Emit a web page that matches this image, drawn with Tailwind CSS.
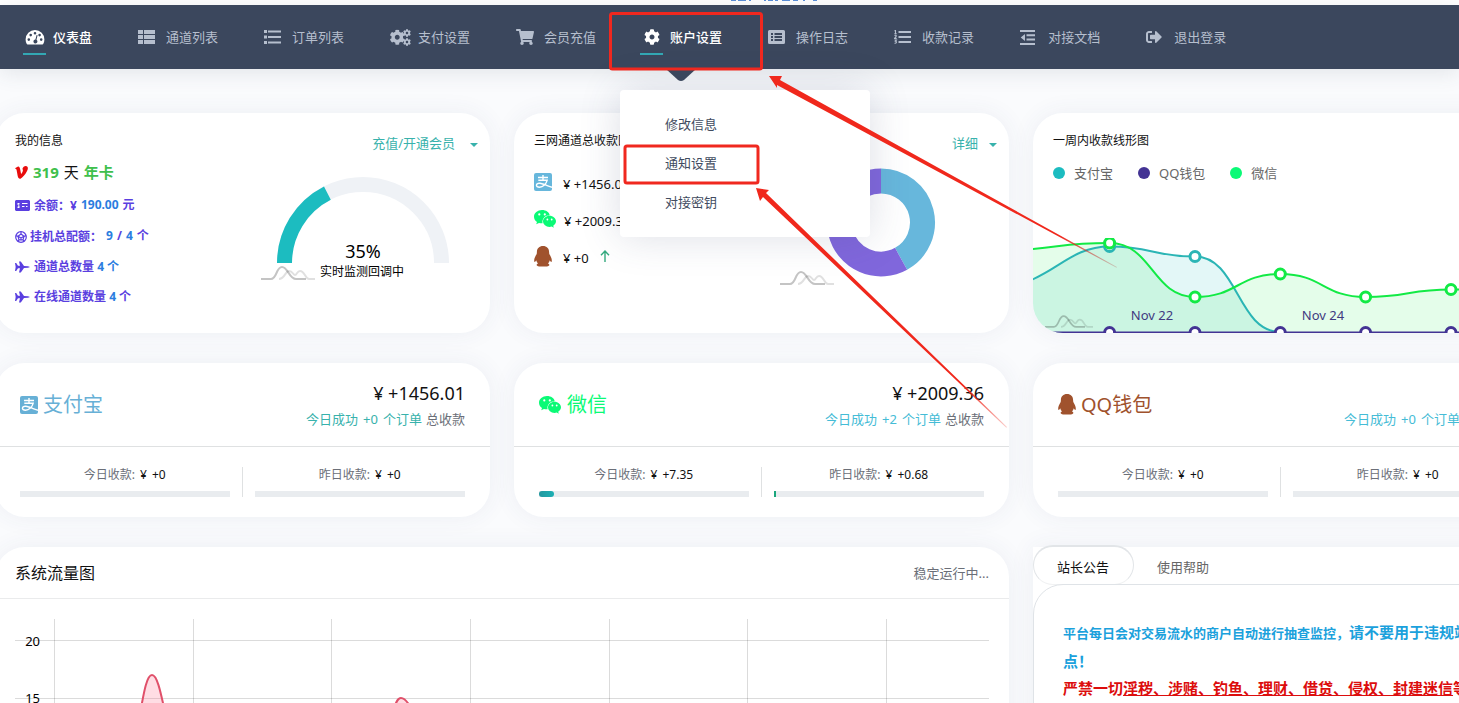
<!DOCTYPE html>
<html lang="zh-CN">
<head>
<meta charset="utf-8">
<meta name="viewport" content="width=device-width, initial-scale=1">
<title>仪表盘</title>
<script src="https://cdn.jsdelivr.net/npm/@tailwindcss/browser@4"></script>
</head>
<body class="relative h-screen overflow-hidden bg-[#fafbfd] font-['Noto_Sans','Noto_Sans_CJK_SC',sans-serif] text-[13px] leading-5 text-[#111]">

<!-- Icon sprite -->
<svg class="hidden" aria-hidden="true">
  <symbol id="i-dash" viewBox="0 0 20 16"><path fill-rule="evenodd" d="M10 1a9.4 9.4 0 0 0-9.4 9.4c0 1.700.4 3.300 1.200 4.700.2.300.4.400.700.400h15c.3 0 .5-.1.700-.4.8-1.400 1.200-3 1.200-4.700A9.400 9.400 0 0 0 10 1zM3.800 9.300a1.300 1.300 0 1 1 0 2.600 1.300 1.300 0 0 1 0-2.600zM5.700 4.800a1.300 1.300 0 1 1 0 2.600 1.300 1.300 0 0 1 0-2.600zM10 2.900a1.300 1.300 0 1 1 0 2.600 1.300 1.300 0 0 1 0-2.600zM14.600 4.800a1.300 1.300 0 1 1 0 2.600 1.300 1.300 0 0 1 0-2.600zM16.200 9.300a1.300 1.300 0 1 1 0 2.600 1.300 1.300 0 0 1 0-2.600zM11.600 6l1 .3-1.100 4.500a2 2 0 1 1-1.100-.3z"/></symbol>
  <symbol id="i-thlist" viewBox="0 0 17 14"><path d="M0 0h5v4H0zM6 0h11v4H6zM0 5h5v4H0zM6 5h11v4H6zM0 10h5v4H0zM6 10h11v4H6z"/></symbol>
  <symbol id="i-list" viewBox="0 0 17 14"><path d="M0 0h3v3H0zM4 .5h13v2H4zM0 5.500h3v3H0zM4 6h13v2H4zM0 11h3v3H0zM4 11.500h13v2H4z"/></symbol>
  <symbol id="i-cog" viewBox="0 0 512 512"><path d="M487.400 315.700l-42.600-24.600c4.300-23.200 4.300-47 0-70.200l42.600-24.600c4.900-2.800 7.100-8.600 5.500-14-11.100-35.600-30-67.800-54.700-94.600-3.800-4.100-10-5.100-14.800-2.300L380.800 110c-17.900-15.400-38.500-27.300-60.800-35.100V25.800c0-5.600-3.900-10.500-9.400-11.700-36.700-8.200-74.300-7.800-109.200 0-5.500 1.200-9.400 6.100-9.400 11.700V75c-22.200 7.900-42.800 19.800-60.800 35.100L88.700 85.500c-4.900-2.800-11-1.900-14.800 2.300-24.700 26.700-43.600 58.900-54.700 94.600-1.700 5.400.6 11.200 5.500 14L67.300 221c-4.300 23.200-4.300 47 0 70.200l-42.600 24.600c-4.900 2.800-7.100 8.600-5.500 14 11.100 35.600 30 67.800 54.700 94.600 3.800 4.100 10 5.100 14.800 2.300l42.600-24.600c17.900 15.400 38.500 27.300 60.800 35.100v49.200c0 5.600 3.900 10.500 9.400 11.700 36.700 8.200 74.300 7.800 109.200 0 5.500-1.200 9.400-6.100 9.400-11.700v-49.200c22.200-7.900 42.800-19.800 60.800-35.100l42.600 24.600c4.900 2.800 11 1.900 14.800-2.300 24.700-26.700 43.600-58.900 54.700-94.600 1.500-5.500-.7-11.300-5.600-14.100zM256 336c-44.100 0-80-35.900-80-80s35.900-80 80-80 80 35.900 80 80-35.900 80-80 80z"/></symbol>
  <symbol id="i-cogs" viewBox="0 0 21 17"><use href="#i-cog" x="-.5" y=".5" width="15.500" height="15.500"/><use href="#i-cog" x="13" y="0" width="8" height="8"/><use href="#i-cog" x="13" y="9" width="8" height="8"/></symbol>
  <symbol id="i-cart" viewBox="0 0 576 512"><path d="M528.120 301.319l47.273-208C578.806 78.301 567.391 64 551.990 64H159.208l-9.166-44.810C147.758 8.021 137.930 0 126.529 0H24C10.745 0 0 10.745 0 24v16c0 13.255 10.745 24 24 24h69.883l70.248 343.435C147.325 417.100 136 435.222 136 456c0 30.928 25.072 56 56 56s56-25.072 56-56c0-15.674-6.447-29.835-16.824-40h209.647C430.447 426.165 424 440.326 424 456c0 30.928 25.072 56 56 56s56-25.072 56-56c0-22.172-12.888-41.332-31.579-50.405l5.517-24.276c3.413-15.018-8.002-29.319-23.403-29.319H218.117l-6.545-32h293.145c11.206 0 20.920-7.754 23.403-18.681z"/></symbol>
  <symbol id="i-listalt" viewBox="0 0 17 14"><path fill-rule="evenodd" d="M1.500 0h14A1.500 1.500 0 0 1 17 1.500v11a1.500 1.500 0 0 1-1.500 1.500h-14A1.500 1.500 0 0 1 0 12.500v-11A1.500 1.500 0 0 1 1.500 0zM3 3v2h2V3zM6.500 3v2H14V3zM3 6v2h2V6zM6.500 6v2H14V6zM3 9v2h2V9zM6.500 9v2H14V9z"/></symbol>
  <symbol id="i-listol" viewBox="0 0 17 14"><path d="M4.500 1H17v2H4.500zM4.500 6H17v2H4.500zM4.500 11H17v2H4.500z"/><path fill="none" stroke="currentColor" stroke-width="1.100" d="M.5 1l1-.6v3.200M.3 3.800h2.400M.5 5.600c.7-.6 2-.4 1.800.5L.5 8.400h2.200M.5 10h1.900L1.400 11.300c1.600 0 1.400 2.200-.9 1.900"/></symbol>
  <symbol id="i-outdent" viewBox="0 0 16 15"><path d="M0 0h15v2H0zM6.500 4.300H15v2H6.500zM6.500 8.600H15v2H6.500zM0 13h15v2H0zM5 4v7L.7 7.500z"/></symbol>
  <symbol id="i-exit" viewBox="0 0 512 512"><path d="M497 273L329 441c-15 15-41 4.500-41-17v-96H152c-13.300 0-24-10.700-24-24v-96c0-13.300 10.700-24 24-24h136V88c0-21.400 25.900-32 41-17l168 168c9.300 9.400 9.300 24.600 0 34zM192 436v-40c0-6.600-5.400-12-12-12H96c-17.700 0-32-14.300-32-32V160c0-17.700 14.300-32 32-32h84c6.600 0 12-5.400 12-12V76c0-6.600-5.400-12-12-12H96c-53 0-96 43-96 96v192c0 53 43 96 96 96h84c6.600 0 12-5.400 12-12z"/></symbol>
  <symbol id="i-alipay" viewBox="0 0 18 18"><rect width="18" height="18" rx="2"/><path fill="none" stroke="#fff" stroke-width="1.400" d="M4 4.500h10M9 2v5M4.300 7.200h8.900c-1 4.200-4.400 7-7.700 7-4.300 0-3.900-4 .2-3.900 3.800.3 8.300 2.900 12.300 4"/></symbol>
  <symbol id="i-wechat" viewBox="0 0 22 18"><path fill-rule="evenodd" d="M8 0C3.500 0 0 3 0 6.700c0 2.100 1.100 3.900 3 5.200L2.200 14.300 5 12.900c1 .3 1.900.4 3 .4h.6C7.600 8.700 11.300 5.200 15.700 5.200 15.200 2.200 12 0 8 0zM5.300 3.300a1.100 1.100 0 1 1 0 2.200 1.100 1.100 0 0 1 0-2.200zM10.800 3.300a1.100 1.100 0 1 1 0 2.200 1.100 1.100 0 0 1 0-2.200zM22 11.300c0-3-3-5.500-6.500-5.500S9 8.300 9 11.300s2.900 5.600 6.500 5.600c.8 0 1.500-.2 2.200-.4l2.100 1.200-.6-2c1.700-1.100 2.800-2.600 2.800-4.400zM13.400 8.600a.9.900 0 1 1 0 1.800.9.900 0 0 1 0-1.800zM17.700 8.600a.9.900 0 1 1 0 1.800.9.900 0 0 1 0-1.800z"/></symbol>
  <symbol id="i-qq" viewBox="0 0 18 21"><path d="M9 0C5.300 0 2.900 2.500 2.900 6c0 .9-.1 1.400-.2 2C1.400 10.100 0 12.800.2 14.700c.1 1.500.6 1.500 1.200.8.300-.3.600-.7.800-1.200.3 1.100.9 2.200 1.800 3.100-1 .4-1.600 1.100-1.300 1.900.4 1 2 1.200 3.600 1.200h5.400c1.600 0 3.200-.2 3.600-1.200.3-.8-.3-1.500-1.300-1.900.9-.9 1.500-2 1.800-3.100.2.500.5.900.8 1.200.6.700 1.100.7 1.200-.8.200-1.900-1.200-4.600-2.500-6.700-.1-.6-.2-1.100-.2-2 0-3.500-2.400-6-6.100-6z"/></symbol>
  <symbol id="i-vine" viewBox="0 0 13 13"><path d="M0 2.200L2.600.7C4 0 4.700 1 5.100 2.900l1 5.200c1.300-1.900 2.500-4.100 1.300-5.100C8 .9 9.600-.2 11.500.2c1.800.6 1.700 2.600.4 5.100C10.300 8.500 7.500 11.800 5.500 12.700 4 13.100 3.200 12 2.700 10L1.500 3.500z"/></symbol>
  <symbol id="i-card" viewBox="0 0 15 11"><path fill-rule="evenodd" d="M1 0h13l1 1v9l-1 1H1l-1-1V1zM2.500 3v1.500L3.800 6l-1.300.8V8h2V5.800L3.200 4.600h1.300V3zM7 3v1h5.500V3zM7 6v1h2.500V6zM11 6v1h1.500V6z"/></symbol>
  <symbol id="i-ball" viewBox="0 0 12 12"><g fill="none" stroke="currentColor" stroke-width="1.200"><circle cx="6" cy="6" r="5.300"/><path d="M6 3L3 5.300l1 3.500h4l1-3.500zM6 3V.8M3 5.300L.8 4.700M4 8.800L2.600 10.500M8 8.800l1.400 1.700M9 5.300l2.200-.6M3.500 5.500L6 7l2.500-1.500M6 7v2"/></g></symbol>
  <symbol id="i-jet" viewBox="0 0 15 12"><path d="M0 2h1.200L3 4.800h2L4 .6h1.800L9 4.900l4 .4 2 .7-2 .7-4 .4-3.200 4.300H4L5 7.200H3L1.200 10H0l.6-3.400V5.400z"/></symbol>
  <symbol id="i-mark" viewBox="0 0 54 14"><g fill="none" stroke="#000" stroke-width="2"><path stroke-opacity=".12" d="M18 13c6 0 6-8 10-8s4 4 6 4 2-4 5-4c5 0 5 8 9 8h6"/><path stroke-opacity=".23" d="M0 13h10c6 0 5-12 11-12s7 12 14 12h10"/></g></symbol>
</svg>

<div class="flex h-[5px] justify-center overflow-hidden bg-white" aria-hidden="true">
  <svg class="ml-[92px] h-[2px] w-[89px] shrink-0" viewBox="0 0 89 2" fill="#5b8fd8"><path d="M0 0h5v1H0zM7 0h8v1H7zM18 0h2v1h-2zM33 0h2v1h-2zM37 0h5v1h-5zM44 0h3v1h-3zM51 0h8v1h-8zM62 0h5v1h-5zM72 0h2v1h-2zM82 0h4v1h-4z"/></svg>
</div>

<header class="relative z-20 bg-[#3b475d] shadow-[0_4px_20px_rgba(59,71,93,0.12)]">
  <nav aria-label="主导航">
    <ul class="flex gap-11 pl-[23px] whitespace-nowrap text-[#b6bfce]">
      <li><a href="#" class="flex h-16 items-center gap-[7px] font-medium text-white"><span class="flex h-9 w-[23px] flex-col items-center border-b-2 border-[#33a8b4] pt-[10px]"><svg class="h-4 w-5 fill-current"><use href="#i-dash"/></svg></span>仪表盘</a></li>
      <li><a href="#" class="flex h-16 items-center gap-[7px]"><span class="flex w-[23px] pl-[2px]"><svg class="h-[14px] w-[17px] fill-current"><use href="#i-thlist"/></svg></span>通道列表</a></li>
      <li><a href="#" class="flex h-16 items-center gap-[7px]"><span class="flex w-[23px] pl-[2px]"><svg class="h-[14px] w-[17px] fill-current"><use href="#i-list"/></svg></span>订单列表</a></li>
      <li><a href="#" class="flex h-16 items-center gap-[7px]"><span class="flex w-[23px] pl-[2px]"><svg class="h-[17px] w-[21px] fill-current"><use href="#i-cogs"/></svg></span>支付设置</a></li>
      <li><a href="#" class="flex h-16 items-center gap-[7px]"><span class="flex w-[23px] pl-[2px]"><svg class="h-4 w-[18px] fill-current"><use href="#i-cart"/></svg></span>会员充值</a></li>
      <li class="relative">
        <a href="#" aria-expanded="true" class="flex h-16 items-center gap-[7px] font-medium text-white"><span class="flex h-9 w-[23px] flex-col items-center border-b-2 border-[#33a8b4] pt-[10px]"><svg class="h-4 w-4 fill-current"><use href="#i-cog"/></svg></span>账户设置</a>
        <svg class="absolute top-16 left-[26px] h-3 w-[30px] fill-[#3b475d]" viewBox="0 0 30 12"><path d="M0 0h30L18 11q-3 2-6 0z"/></svg>
        <ul class="absolute top-[85px] left-[-20px] w-[250px] rounded-sm bg-white py-[15px] pl-[45px] text-[#414b60] shadow-[0_0_40px_rgba(60,70,110,0.18)]">
          <li><a href="#" class="block leading-[39px]">修改信息</a></li>
          <li><a href="#" class="block leading-[39px]">通知设置</a></li>
          <li><a href="#" class="block leading-[39px]">对接密钥</a></li>
        </ul>
      </li>
      <li><a href="#" class="flex h-16 items-center gap-[7px]"><span class="flex w-[23px] pl-[2px]"><svg class="h-[14px] w-[17px] fill-current"><use href="#i-listalt"/></svg></span>操作日志</a></li>
      <li><a href="#" class="flex h-16 items-center gap-[7px]"><span class="flex w-[23px] pl-[2px]"><svg class="h-[14px] w-[17px] fill-current"><use href="#i-listol"/></svg></span>收款记录</a></li>
      <li><a href="#" class="flex h-16 items-center gap-[7px]"><span class="flex w-[23px] pl-[2px]"><svg class="h-[15px] w-4 fill-current"><use href="#i-outdent"/></svg></span>对接文档</a></li>
      <li><a href="#" class="flex h-16 items-center gap-[7px]"><span class="flex w-[23px] pl-[2px]"><svg class="h-4 w-4 fill-current"><use href="#i-exit"/></svg></span>退出登录</a></li>
    </ul>
  </nav>
</header>

<main class="-ml-[5px] grid w-[calc(100%+74px)] grid-cols-3 gap-x-6 gap-y-[30px] pt-11">

  <section class="flex h-[220px] justify-between rounded-[30px] bg-white pt-[18px] pr-3 pl-5 shadow-[0_0_24px_rgba(60,75,110,0.07)]">
    <div>
      <h2 class="text-xs leading-5">我的信息</h2>
      <p class="mt-[11px] flex h-5 items-center gap-[5px] text-[15px] font-bold text-[#3fc04c]"><svg class="h-[13px] w-[13px] fill-[#e80c0c]"><use href="#i-vine"/></svg><span class="flex gap-[5px]"><span>319</span><span class="font-normal text-[#111]">天</span><span>年卡</span></span></p>
      <ul class="mt-[13px] flex flex-col gap-[10px] text-xs leading-5 font-bold text-[#5a3fe0]">
        <li class="flex items-center gap-1"><svg class="h-[11px] w-[15px] fill-current"><use href="#i-card"/></svg><span class="flex gap-1"><span>余额<span class="font-['Noto_Sans_CJK_TC']">：</span>¥</span><span class="text-[#2b7de0]">190.00</span><span>元</span></span></li>
        <li class="flex items-center gap-[3px]"><svg class="h-3 w-3"><use href="#i-ball"/></svg><span class="flex gap-1"><span>挂机总配额<span class="font-['Noto_Sans_CJK_TC']">：</span></span><span class="text-[#2b7de0]">9</span><span>/</span><span class="text-[#2b7de0]">4</span><span>个</span></span></li>
        <li class="flex items-center gap-1"><svg class="h-3 w-[15px] fill-current"><use href="#i-jet"/></svg><span>通道总数量 <span class="text-[#2b7de0]">4 个</span></span></li>
        <li class="flex items-center gap-1"><svg class="h-3 w-[15px] fill-current"><use href="#i-jet"/></svg><span>在线通道数量 <span class="text-[#2b7de0]">4</span> 个</span></li>
      </ul>
    </div>
    <div class="flex flex-col">
      <a href="#" class="mt-[2px] flex items-center justify-end gap-[15px] text-[#38b2ac]">充值/开通会员<svg class="mt-1 h-1 w-2 fill-current" viewBox="0 0 8 4"><path d="M0 0h8L4 4z"/></svg></a>
      <svg class="mt-6 mr-[27px] h-[110px] w-[190px] self-start" viewBox="0 0 190 110" role="img" aria-label="35% 实时监测回调中">
        <path fill="none" stroke="#eff2f6" stroke-width="15" d="M23.500 86a78.500 78.500 0 0 1 157 0"/>
        <path fill="none" stroke="#1cbcc0" stroke-width="15" d="M23.500 86A78.500 78.500 0 0 1 66.400 16.100"/>
        <use href="#i-mark" y="89" width="54" height="14"/>
        <text x="102" y="81" text-anchor="middle" font-size="18">35%</text>
        <text x="101" y="99" text-anchor="middle" font-size="12">实时监测回调中</text>
      </svg>
    </div>
  </section>

  <section class="flex h-[220px] justify-between rounded-[30px] bg-white pt-[18px] pr-3 pl-5 shadow-[0_0_24px_rgba(60,75,110,0.07)]">
    <div>
      <h2 class="text-xs leading-5">三网通道总收款图</h2>
      <ul class="mt-[21px] flex flex-col gap-[17px]">
        <li class="flex h-5 items-center gap-[11px]"><svg class="h-[18px] w-[18px] shrink-0 fill-[#67b7dc]"><use href="#i-alipay"/></svg><span class="pt-1">¥ +1456.01</span></li>
        <li class="flex h-5 items-center gap-2"><svg class="h-[18px] w-[22px] shrink-0 fill-[#0afa76]"><use href="#i-wechat"/></svg><span class="pt-1">¥ +2009.36</span></li>
        <li class="flex h-5 items-center gap-[11px]"><svg class="h-[21px] w-[18px] shrink-0 fill-[#a0522d]"><use href="#i-qq"/></svg><span class="pt-1">¥ +0</span><svg class="h-3 w-[10px] fill-none stroke-[#35ab7f]" viewBox="0 0 10 12" stroke-width="1.400"><path d="M5 12V1M1 5.300L5 1l4 4.300"/></svg></li>
      </ul>
    </div>
    <div class="flex flex-col">
      <a href="#" class="mt-[2px] flex items-center justify-end gap-[11px] text-[#38b2ac]">详细<svg class="mt-1 h-1 w-2 fill-current" viewBox="0 0 8 4"><path d="M0 0h8L4 4z"/></svg></a>
      <svg class="mt-[14px] mr-[60px] h-[120px] w-[157px]" viewBox="0 0 157 120" role="img" aria-label="三网通道总收款图">
        <path fill="none" stroke="#67b7dc" stroke-width="25" d="M101 14a41.500 41.500 0 0 1 20.100 77.800"/>
        <path fill="none" stroke="#8067dc" stroke-width="25" d="M121.100 91.800A41.500 41.500 0 1 1 101 14"/>
        <use href="#i-mark" y="104" width="54" height="14"/>
      </svg>
    </div>
  </section>

  <section class="flex h-[220px] flex-col justify-between overflow-hidden rounded-[30px] bg-white pt-[18px] shadow-[0_0_24px_rgba(60,75,110,0.07)]">
    <div class="pl-5">
      <h2 class="text-xs leading-5">一周内收款线形图</h2>
      <ul class="mt-3 flex gap-[25px] text-[#666]">
        <li class="flex items-center gap-[9px]"><span class="h-3 w-3 rounded-full bg-[#1cbcc0]"></span>支付宝</li>
        <li class="flex items-center gap-[9px]"><span class="h-3 w-3 rounded-full bg-[#433394]"></span>QQ钱包</li>
        <li class="flex items-center gap-[9px]"><span class="h-3 w-3 rounded-full bg-[#0afa76]"></span>微信</li>
      </ul>
    </div>
    <svg class="block w-full" viewBox="0 0 495 95" role="img" aria-label="一周内收款线形图">
      <path fill="#1cbcc0" fill-opacity=".12" d="M-9 45C25 33 40 8.500 76.600 8.500c42.700 0 42.700 10 85.400 10S204.600 95 247.300 95H-9z"/>
      <path fill="#0bf040" fill-opacity=".11" d="M-9 12C34 8 34 5 76.600 5S119.300 59 162 59s42.600-23 85.300-23S290 59 332.600 59s42.700-7.500 85.400-7.500h77V95H-9z"/>
      <g fill="none" stroke-width="2">
        <path stroke="#2bb5b5" d="M-9 45C25 33 40 8.500 76.600 8.500c42.700 0 42.700 10 85.400 10S204.600 94 247.300 94"/>
        <path stroke="#12ea45" d="M-9 12C34 8 34 5 76.600 5S119.300 59 162 59s42.600-23 85.300-23S290 59 332.600 59s42.700-7.500 85.400-7.500h77"/>
        <path stroke="#433394" d="M0 94.500h495"/>
      </g>
      <use href="#i-mark" x="12" y="77" width="48" height="13"/>
      <g fill="#fff" stroke-width="3">
        <g stroke="#2bb5b5"><circle cx="76.600" cy="8.500" r="5"/><circle cx="162" cy="18.500" r="5"/></g>
        <g stroke="#12ea45"><circle cx="76.600" cy="5" r="5"/><circle cx="162" cy="59" r="5"/><circle cx="247.300" cy="36" r="5"/><circle cx="332.600" cy="59" r="5"/><circle cx="418" cy="51.500" r="5"/></g>
        <g stroke="#433394"><circle cx="76.600" cy="94.500" r="5"/><circle cx="162" cy="94.500" r="5"/><circle cx="247.300" cy="94.500" r="5"/><circle cx="332.600" cy="94.500" r="5"/><circle cx="418" cy="94.500" r="5"/></g>
      </g>
      <g font-size="13" text-anchor="middle" fill="#3f3a80"><text x="119" y="82">Nov 22</text><text x="290" y="82">Nov 24</text></g>
    </svg>
  </section>

  <section class="rounded-[30px] bg-white pb-5 shadow-[0_0_24px_rgba(60,75,110,0.07)]">
    <div class="flex h-[84px] items-center justify-between border-b border-[#dfe1e2] px-[25px]">
      <h2 class="flex items-center gap-[5px] text-xl text-[#67b0d6]"><svg class="h-[18px] w-[18px] fill-[#67b0d6]"><use href="#i-alipay"/></svg>支付宝</h2>
      <div class="text-right"><p class="text-lg leading-7">¥ +1456.01</p><p class="flex justify-end gap-1 leading-6 text-[#6b6f78]"><span class="flex gap-[5px] text-[#38b2ac]"><span>今日成功</span><span>+0</span><span>个订单</span></span><span>总收款</span></p></div>
    </div>
    <div class="grid grid-cols-2 px-[25px] pt-5 text-center text-xs">
      <div class="border-r border-[#dfe1e2] pr-3"><p class="flex h-6 justify-center gap-[5px] leading-4 text-[#6b6f78]"><span>今日收款:</span><span class="text-[#111]">¥</span><span class="text-[#111]">+0</span></p><div class="h-[6px] bg-[#e9ecef]"></div></div>
      <div class="pl-3"><p class="flex h-6 justify-center gap-[5px] leading-4 text-[#6b6f78]"><span>昨日收款:</span><span class="text-[#111]">¥</span><span class="text-[#111]">+0</span></p><div class="h-[6px] bg-[#e9ecef]"></div></div>
    </div>
  </section>

  <section class="rounded-[30px] bg-white pb-5 shadow-[0_0_24px_rgba(60,75,110,0.07)]">
    <div class="flex h-[84px] items-center justify-between border-b border-[#dfe1e2] px-[25px]">
      <h2 class="flex items-center gap-[6px] text-xl text-[#0afa76]"><svg class="h-[18px] w-[22px] fill-current"><use href="#i-wechat"/></svg>微信</h2>
      <div class="text-right"><p class="text-lg leading-7">¥ +2009.36</p><p class="flex justify-end gap-1 leading-6 text-[#6b6f78]"><span class="flex gap-[5px] text-[#45bcd6]"><span>今日成功</span><span>+2</span><span>个订单</span></span><span>总收款</span></p></div>
    </div>
    <div class="grid grid-cols-2 px-[25px] pt-5 text-center text-xs">
      <div class="border-r border-[#dfe1e2] pr-3"><p class="flex h-6 justify-center gap-[5px] leading-4 text-[#6b6f78]"><span>今日收款:</span><span class="text-[#111]">¥</span><span class="text-[#111]">+7.35</span></p><div class="h-[6px] bg-[#e9ecef]"><div class="h-full rounded-full bg-gradient-to-r from-[#23979f] to-[#1cb0b4]" style="width:7.35%"></div></div></div>
      <div class="pl-3"><p class="flex h-6 justify-center gap-[5px] leading-4 text-[#6b6f78]"><span>昨日收款:</span><span class="text-[#111]">¥</span><span class="text-[#111]">+0.68</span></p><div class="h-[6px] bg-[#e9ecef]"><div class="h-full min-w-[2px] bg-[#1aa67c]" style="width:0.68%"></div></div></div>
    </div>
  </section>

  <section class="rounded-[30px] bg-white pb-5 shadow-[0_0_24px_rgba(60,75,110,0.07)]">
    <div class="flex h-[84px] items-center justify-between border-b border-[#dfe1e2] px-[25px]">
      <h2 class="flex items-center gap-[5px] text-xl text-[#a0522d]"><svg class="h-[21px] w-[18px] fill-current"><use href="#i-qq"/></svg>QQ钱包</h2>
      <div class="text-right"><p class="text-lg leading-7">¥ +0</p><p class="flex justify-end gap-1 leading-6 text-[#6b6f78]"><span class="flex gap-[5px] text-[#45bcd6]"><span>今日成功</span><span>+0</span><span>个订单</span></span><span>总收款</span></p></div>
    </div>
    <div class="grid grid-cols-2 px-[25px] pt-5 text-center text-xs">
      <div class="border-r border-[#dfe1e2] pr-3"><p class="flex h-6 justify-center gap-[5px] leading-4 text-[#6b6f78]"><span>今日收款:</span><span class="text-[#111]">¥</span><span class="text-[#111]">+0</span></p><div class="h-[6px] bg-[#e9ecef]"></div></div>
      <div class="pl-3"><p class="flex h-6 justify-center gap-[5px] leading-4 text-[#6b6f78]"><span>昨日收款:</span><span class="text-[#111]">¥</span><span class="text-[#111]">+0</span></p><div class="h-[6px] bg-[#e9ecef]"></div></div>
    </div>
  </section>

  <section class="col-span-2 rounded-[30px] bg-white shadow-[0_0_24px_rgba(60,75,110,0.07)]">
    <div class="flex h-[52px] items-center justify-between border-b border-[#eaebec] px-5">
      <h2 class="text-base">系统流量图</h2>
      <p class="text-[#6b6f78]">稳定运行中...</p>
    </div>
    <div class="px-5 pt-5">
      <svg class="block w-full" viewBox="0 0 974 140" role="img" aria-label="系统流量图">
        <path fill="none" stroke="#000" stroke-opacity=".14" d="M39.500 0v140M178.500 0v140M316.500 0v140M455.500 0v140M594.500 0v140M732.500 0v140M871.500 0v140M0 21.500h974M0 79.500h974M0 136.500h974"/>
        <path fill="#ff6384" fill-opacity=".22" stroke="#e0506a" stroke-width="2" d="M122 110C127 88 130 56 137 56s11 32 17 54zM376 98c4-10 5-19 10-19s10 9 14 19z"/>
        <g font-size="13" text-anchor="end"><text x="25" y="27">20</text><text x="25" y="84">15</text></g>
      </svg>
    </div>
  </section>

  <section class="flex flex-col bg-white shadow-[0_0_24px_rgba(60,75,110,0.07)]">
    <div role="tablist" class="-mt-[2px] flex h-10">
      <button type="button" role="tab" aria-selected="true" class="h-10 rounded-[20px] border border-t-2 border-[#e2e5e8] border-b-[#f1f2f3] bg-white pt-[2px] pr-6 pl-[23px] text-[#111]">站长公告</button>
      <button type="button" role="tab" aria-selected="false" class="h-10 pt-[3px] pr-6 pl-[23px] text-[#666]">使用帮助</button>
    </div>
    <div role="tabpanel" class="-mt-px grow rounded-tl-[30px] border border-[#dfe3e7] bg-white px-[29px] pt-[34px] text-[15px] leading-[27px] font-bold">
      <p class="text-[#1ba1dc]"><span class="text-[13px]">平台每日会对交易流水的商户自动进行抽查监控，</span>请不要用于违规站点<span class="font-['Noto_Sans_CJK_TC']">！</span></p>
      <p class="text-[#dc0d0d]">严禁一切<u class="underline">淫秽、涉赌、钓鱼、理财、借贷、侵权、封建迷信</u>等</p>
    </div>
  </section>
</main>

<!-- Guide annotations laid over the page -->
<svg class="pointer-events-none absolute top-0 left-0 z-30 h-[703px] w-[1459px]" viewBox="0 0 1459 703" aria-hidden="true">
  <defs>
    <linearGradient id="f1" gradientUnits="userSpaceOnUse" x1="1060" y1="236" x2="1118" y2="268"><stop stop-color="#f0281c"/><stop offset="1" stop-color="#b03030" stop-opacity=".2"/></linearGradient>
    <linearGradient id="f2" gradientUnits="userSpaceOnUse" x1="965" y1="387" x2="1008" y2="429"><stop stop-color="#f0281c"/><stop offset="1" stop-color="#ee2a1c" stop-opacity=".2"/></linearGradient>
  </defs>
  <g fill="none" stroke="#f0281f" stroke-width="3"><rect x="610.500" y="13.500" width="151" height="55.500" rx="2"/><rect x="625" y="146" width="133" height="37" rx="2"/></g>
  <path fill="url(#f1)" d="M769 76h13l-2 4L1117 267l-.5.700L777 85v3z"/>
  <path fill="url(#f2)" d="M756 188l13 2-3 3L1007 427l-.7.700L763 197l-3 4z"/>
</svg>
</body>
</html>
